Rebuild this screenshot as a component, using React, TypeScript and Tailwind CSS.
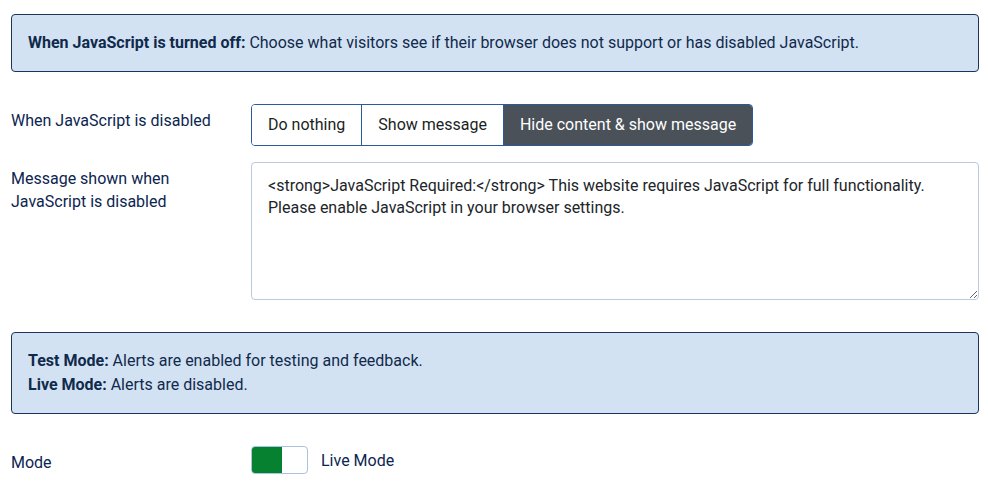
import { useState } from 'react'

const OPTIONS = ['Do nothing', 'Show message', 'Hide content & show message']

const DEFAULT_MESSAGE =
  '<strong>JavaScript Required:</strong> This website requires JavaScript for full functionality. Please enable JavaScript in your browser settings.'

function Notice({ children }: { children: React.ReactNode }) {
  return (
    <div className="rounded-[4px] border border-[#1a3558] bg-[#d3e2f3] px-4 py-4 text-[16px] leading-6 text-[#102a4c]">
      {children}
    </div>
  )
}

export default function App() {
  const [mode, setMode] = useState(2)
  const [message, setMessage] = useState(DEFAULT_MESSAGE)
  const [live, setLive] = useState(true)

  return (
    <div
      className="min-h-screen bg-white pl-[11px] pr-[9px] pt-[14px] text-[#0c2550]"
      style={{ fontFamily: 'Roboto, "Liberation Sans", sans-serif' }}
    >
      <Notice>
        <strong className="font-bold">When JavaScript is turned off:</strong> Choose what visitors see if
        their browser does not support or has disabled JavaScript.
      </Notice>

      <div className="mt-8 flex">
        <label className="w-[240px] shrink-0 pt-[5px] text-[16px] leading-[23px]">When JavaScript is disabled</label>
        <div className="flex h-[42px] overflow-hidden rounded-[4px] border border-[#2a5a9a]">
          {OPTIONS.map((opt, i) => (
            <button
              key={opt}
              onClick={() => setMode(i)}
              className={
                mode === i
                  ? 'bg-[#4a5159] px-4 text-[16px] text-white'
                  : 'border-r border-[#2a5a9a] bg-white px-4 text-[16px] text-[#1b1f24] last:border-r-0'
              }
            >
              {opt}
            </button>
          ))}
        </div>
      </div>

      <div className="mt-4 flex">
        <label className="w-[240px] shrink-0 pt-[5px] text-[16px] leading-[23px]">
          Message shown when
          <br />
          JavaScript is disabled
        </label>
        <textarea
          value={message}
          onChange={e => setMessage(e.target.value)}
          className="h-[138px] flex-1 resize-y rounded-[4px] border border-[#b7cbe3] px-4 pt-[12px] text-[16px] leading-[22px] text-[#212529] outline-none"
        />
      </div>

      <div className="mt-8">
        <Notice>
          <strong className="font-bold">Test Mode:</strong> Alerts are enabled for testing and feedback.
          <br />
          <strong className="font-bold">Live Mode:</strong> Alerts are disabled.
        </Notice>
      </div>

      <div className="mt-8 flex items-center">
        <label className="w-[240px] shrink-0 pt-[5px] text-[16px] leading-[23px]">Mode</label>
        <button
          onClick={() => setLive(!live)}
          className="flex h-[28px] w-[57px] overflow-hidden rounded-[4px] border border-[#a9c3e0] bg-white"
        >
          <span className={live ? 'h-full w-[30px] bg-[#05812f]' : 'h-full w-[30px] bg-white'} />
        </button>
        <span className="ml-[13px] text-[16px] leading-[23px]">{live ? 'Live Mode' : 'Test Mode'}</span>
      </div>
    </div>
  )
}
